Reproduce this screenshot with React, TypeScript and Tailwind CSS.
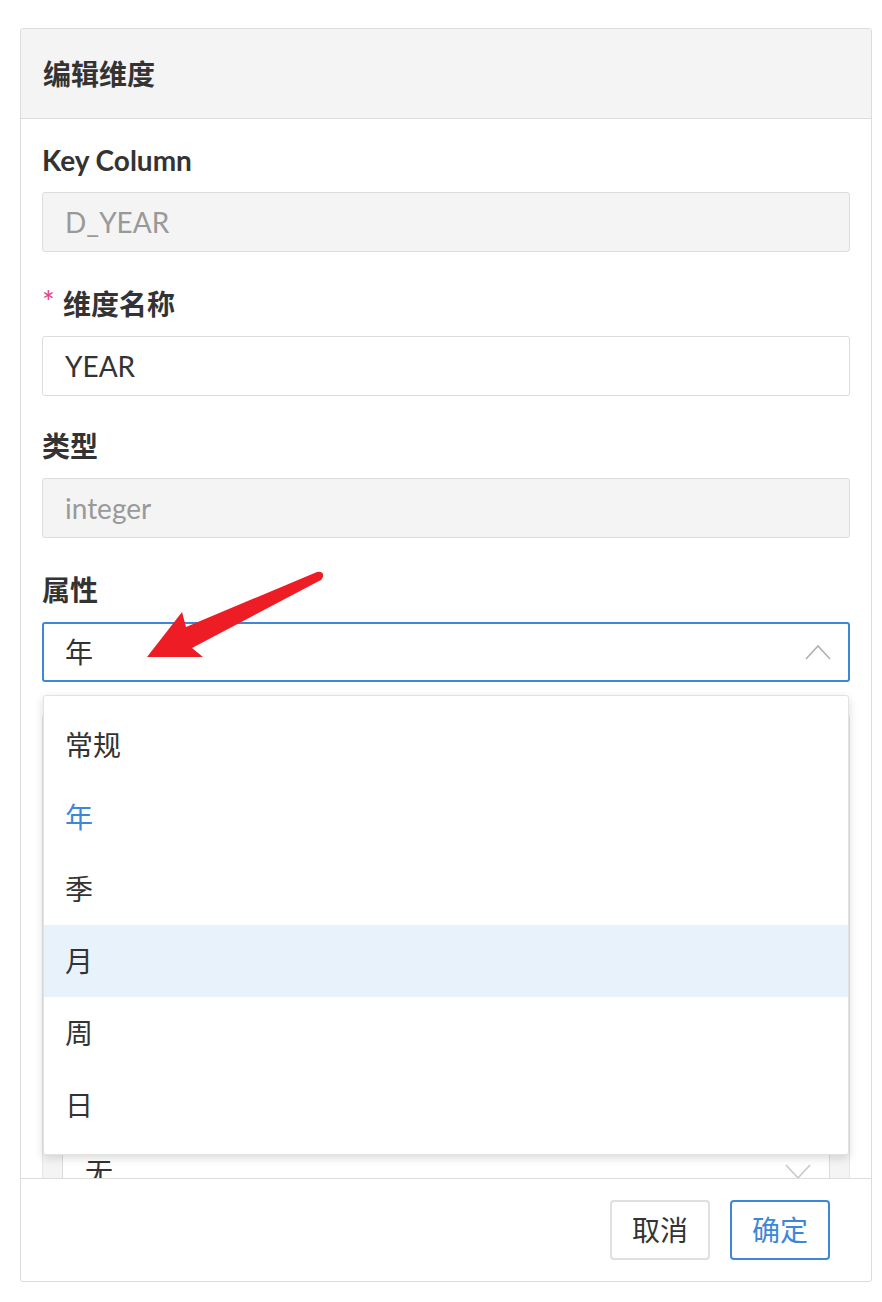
import { ReactNode } from 'react';

const font = { fontFamily: 'Lato, "Noto Sans CJK SC", sans-serif' };

function Label({ children, required }: { children: ReactNode; required?: boolean }) {
    return (
        <div className="flex items-center h-[40px] mb-[12px] text-[28px] font-bold text-[#333]">
            {required && <span className="text-[#e0457b] text-[30px] font-normal w-[21px] -mt-[6px]">*</span>}
            {children}
        </div>
    );
}

function ChevronUp() {
    return (
        <svg width="26" height="16" viewBox="0 0 26 16" fill="none">
            <path d="M1 15 L13 2 L25 15" stroke="#b0b0b0" strokeWidth="1.6" />
        </svg>
    );
}

function ChevronDown() {
    return (
        <svg width="26" height="16" viewBox="0 0 26 16" fill="none">
            <path d="M1 1 L13 14 L25 1" stroke="#c8c8c8" strokeWidth="1.6" />
        </svg>
    );
}

const options = ['常规', '年', '季', '月', '周', '日'];

export default function App() {
    return (
        <div className="relative w-[882px] h-[1302px] bg-white pt-[28px] pl-[20px]" style={font}>
            <div className="w-[852px] h-[1254px] border border-[#dcdcdc] rounded-[3px] flex flex-col overflow-hidden">
                {/* Header */}
                <div className="h-[90px] shrink-0 bg-[#f4f4f4] border-b border-[#dcdcdc] flex items-center pl-[22px]">
                    <span className="text-[28px] font-bold text-[#333]">编辑维度</span>
                </div>

                {/* Body */}
                <div className="h-[1059px] shrink-0 overflow-hidden pt-[21px] pl-[21px] pr-[21px]">
                    <Label>Key Column</Label>
                    <div className="h-[60px] mb-[32px] border border-[#dcdcdc] rounded-[3px] bg-[#f4f4f4] flex items-center pl-[22px] text-[28px] text-[#999]">
                        D_YEAR
                    </div>

                    <Label required>维度名称</Label>
                    <div className="h-[60px] mb-[30px] border border-[#dcdcdc] rounded-[3px] bg-white flex items-center pl-[22px] text-[28px] text-[#333]">
                        YEAR
                    </div>

                    <Label>类型</Label>
                    <div className="h-[60px] mb-[32px] border border-[#dcdcdc] rounded-[3px] bg-[#f4f4f4] flex items-center pl-[22px] text-[28px] text-[#999]">
                        integer
                    </div>

                    <Label>属性</Label>
                    <div className="relative mb-[32px] z-10">
                        <div className="h-[60px] border-2 border-[#3d87d8] rounded-[3px] bg-white flex items-center justify-between pl-[21px] pr-[17px] text-[28px] text-[#333]">
                            <span>年</span>
                            <ChevronUp />
                        </div>
                        {/* Dropdown menu */}
                        <div className="absolute top-[73px] left-[1px] right-[1px] bg-white border border-[#e2e2e2] rounded-[3px] shadow-[0_3px_10px_rgba(0,0,0,0.15)] py-[13px]">
                            {options.map((o) => (
                                <div
                                    key={o}
                                    className={`h-[72px] flex items-center pl-[21px] text-[28px] ${o === '年' ? 'text-[#3d87d8]' : 'text-[#333]'} ${o === '月' ? 'bg-[#e8f2fb]' : ''}`}
                                >
                                    {o}
                                </div>
                            ))}
                        </div>
                    </div>

                    {/* Section mostly hidden under the dropdown */}
                    <div className="bg-[#f4f4f4] border border-[#e6e6e6] rounded-[3px] p-[19px]">
                        <div className="h-[68px]"></div>
                        <div className="mb-[32px]">
                            <div className="h-[40px] mb-[12px]"></div>
                            <div className="h-[60px] border border-[#dcdcdc] rounded-[3px] bg-white" />
                        </div>
                        <div className="mb-[32px]">
                            <div className="h-[40px] mb-[12px]"></div>
                            <div className="h-[60px] border border-[#dcdcdc] rounded-[3px] bg-white" />
                        </div>
                        <div className="h-[40px] mb-[12px]"></div>
                        <div className="h-[60px] border border-[#dcdcdc] rounded-[3px] bg-white flex items-center justify-between pl-[22px] pr-[18px] text-[28px] text-[#333]">
                            <span>无</span>
                            <ChevronDown />
                        </div>
                    </div>
                </div>

                {/* Footer */}
                <div className="h-[103px] shrink-0 border-t border-[#dcdcdc] flex items-center justify-end gap-[20px] pr-[41px]">
                    <button className="w-[100px] h-[60px] border-2 border-[#e0e0e0] rounded-[4px] bg-white text-[28px] text-[#333]">取消</button>
                    <button className="w-[100px] h-[60px] border-2 border-[#3d87d8] rounded-[4px] bg-white text-[28px] text-[#3d87d8]">确定</button>
                </div>
            </div>

            {/* Annotation arrow */}
            <svg className="absolute left-0 top-0 pointer-events-none z-20" width="882" height="1302" viewBox="0 0 882 1302">
                <path
                    d="M147 657 L182 612 L186 627 L317 572 Q324 571 323 577 Q322 580 319 581 L192 648 L203 657 Z"
                    fill="#ee1d25"
                />
            </svg>
        </div>
    );
}
